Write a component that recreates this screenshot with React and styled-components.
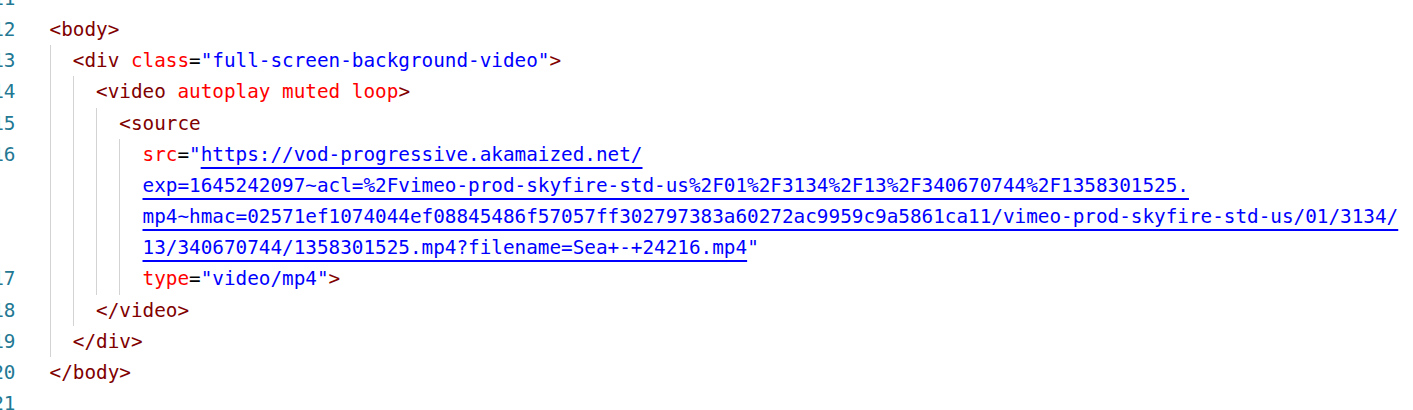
import styled, { createGlobalStyle } from "styled-components";

const LINE_H = 31.17;

const GlobalStyle = createGlobalStyle`
  html, body {
    margin: 0;
    padding: 0;
    background: #ffffff;
    overflow: hidden;
  }
`;

const Editor = styled.div`
  display: flex;
  flex-direction: column;
  margin-top: -17px;
  font-family: "DejaVu Sans Mono", "Liberation Mono", monospace;
  font-size: 19.32px;
  line-height: ${LINE_H}px;
  white-space: pre;
  color: #000000;
`;

const Line = styled.div`
  display: flex;
  align-items: stretch;
`;

const LineNo = styled.div`
  flex: none;
  width: 40px;
  margin-left: -24.5px;
  margin-right: 34px;
  text-align: right;
  color: #237893;
  height: ${LINE_H}px;
`;

const Guides = styled.div`
  display: flex;
  flex: none;
`;

const Guide = styled.div`
  width: 2ch;
  border-left: 1px solid #d3d3d3;
  box-sizing: border-box;
`;

const Rows = styled.div`
  display: flex;
  flex-direction: column;
`;

const Row = styled.div`
  height: ${LINE_H}px;
`;

const Tag = styled.span`
  color: #800000;
`;

const Attr = styled.span`
  color: #ff0000;
`;

const Str = styled.span`
  color: #0000ff;
`;

const Link = styled(Str)`
  text-decoration: underline;
  text-decoration-thickness: 2px;
  text-underline-offset: 6px;
`;

function CodeLine({ n, indent = 0, rows = [] }) {
  return (
    <Line>
      <LineNo>{n}</LineNo>
      <Guides>
        {Array.from({ length: indent }).map((_, i) => (
          <Guide key={i} />
        ))}
      </Guides>
      <Rows>
        {rows.length === 0 ? <Row /> : rows.map((r, i) => <Row key={i}>{r}</Row>)}
      </Rows>
    </Line>
  );
}

export default function App() {
  return (
    <>
      <GlobalStyle />
      <Editor>
        <CodeLine n={11} />
        <CodeLine n={12} rows={[<Tag>&lt;body&gt;</Tag>]} />
        <CodeLine
          n={13}
          indent={1}
          rows={[
            <>
              <Tag>&lt;div</Tag> <Attr>class</Attr>=<Str>"full-screen-background-video"</Str>
              <Tag>&gt;</Tag>
            </>,
          ]}
        />
        <CodeLine
          n={14}
          indent={2}
          rows={[
            <>
              <Tag>&lt;video</Tag> <Attr>autoplay</Attr> <Attr>muted</Attr> <Attr>loop</Attr>
              <Tag>&gt;</Tag>
            </>,
          ]}
        />
        <CodeLine n={15} indent={3} rows={[<Tag>&lt;source</Tag>]} />
        <CodeLine
          n={16}
          indent={4}
          rows={[
            <>
              <Attr>src</Attr>=<Str>"</Str>
              <Link>https://vod-progressive.akamaized.net/</Link>
            </>,
            <Link>exp=1645242097~acl=%2Fvimeo-prod-skyfire-std-us%2F01%2F3134%2F13%2F340670744%2F1358301525.</Link>,
            <Link>mp4~hmac=02571ef1074044ef08845486f57057ff302797383a60272ac9959c9a5861ca11/vimeo-prod-skyfire-std-us/01/3134/</Link>,
            <>
              <Link>13/340670744/1358301525.mp4?filename=Sea+-+24216.mp4</Link>
              <Str>"</Str>
            </>,
          ]}
        />
        <CodeLine
          n={17}
          indent={4}
          rows={[
            <>
              <Attr>type</Attr>=<Str>"video/mp4"</Str>
              <Tag>&gt;</Tag>
            </>,
          ]}
        />
        <CodeLine n={18} indent={2} rows={[<Tag>&lt;/video&gt;</Tag>]} />
        <CodeLine n={19} indent={1} rows={[<Tag>&lt;/div&gt;</Tag>]} />
        <CodeLine n={20} rows={[<Tag>&lt;/body&gt;</Tag>]} />
        <CodeLine n={21} />
      </Editor>
    </>
  );
}
